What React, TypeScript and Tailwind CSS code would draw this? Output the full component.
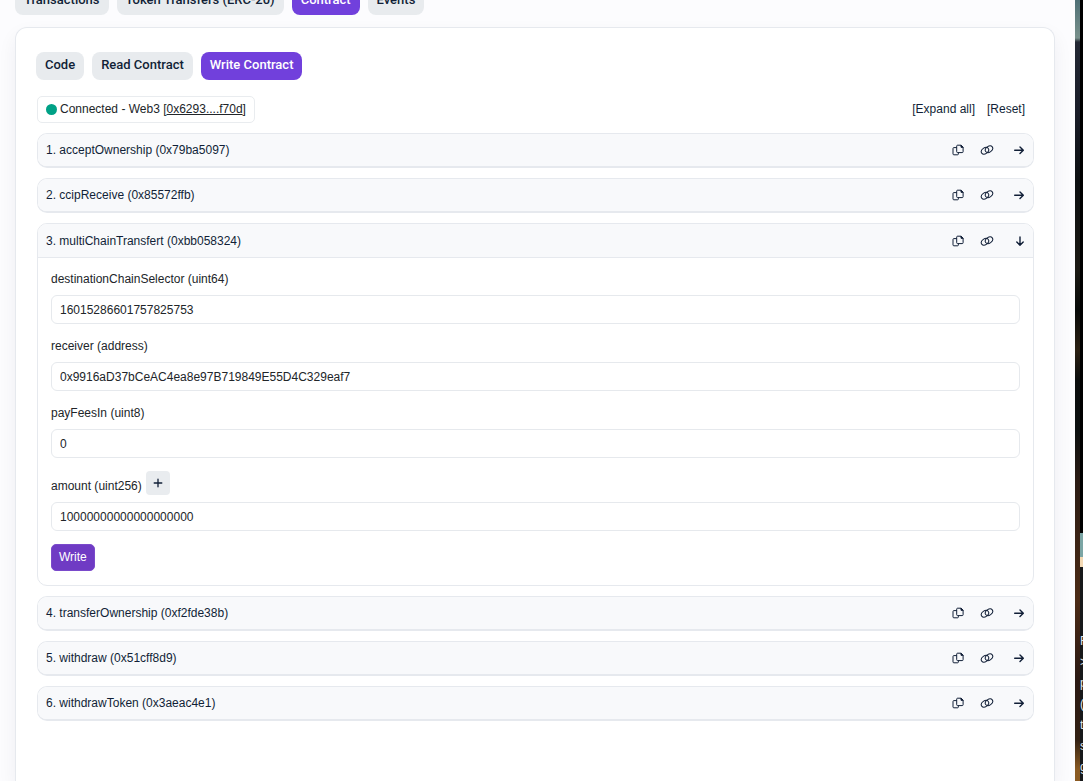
import { useState } from 'react';

const SANS = "font-['Liberation_Sans',Arial,sans-serif]";
const ROBOTO = "font-['Roboto',sans-serif]";

type Field = { name: string; type: string; value: string; canAddZeroes?: boolean };
type Method = { name: string; selector: string; fields: Field[] };

const pageTabs = ['Transactions', 'Token Transfers (ERC-20)', 'Contract', 'Events'];
const contractTabs = ['Code', 'Read Contract', 'Write Contract'];

const methods: Method[] = [
  { name: 'acceptOwnership', selector: '0x79ba5097', fields: [] },
  { name: 'ccipReceive', selector: '0x85572ffb', fields: [] },
  {
    name: 'multiChainTransfert',
    selector: '0xbb058324',
    fields: [
      { name: 'destinationChainSelector', type: 'uint64', value: '16015286601757825753' },
      { name: 'receiver', type: 'address', value: '0x9916aD37bCeAC4ea8e97B719849E55D4C329eaf7' },
      { name: 'payFeesIn', type: 'uint8', value: '0' },
      { name: 'amount', type: 'uint256', value: '10000000000000000000', canAddZeroes: true },
    ],
  },
  { name: 'transferOwnership', selector: '0xf2fde38b', fields: [] },
  { name: 'withdraw', selector: '0x51cff8d9', fields: [] },
  { name: 'withdrawToken', selector: '0x3aeac4e1', fields: [] },
];

function CopyIcon() {
  return (
    <svg viewBox="0 0 12 12" className="w-3 h-3" fill="none" stroke="currentColor" strokeWidth="1" strokeLinejoin="round">
      <path d="M5.6 1.2h3.5l2 2v4.5a.9.9 0 0 1-.9.9H5.6a.9.9 0 0 1-.9-.9V2.1a.9.9 0 0 1 .9-.9z" />
      <path d="M9 1.2v2.1h2.1z" fill="currentColor" />
      <path d="M4.7 3.6H1.9a.9.9 0 0 0-.9.9v5.4a.9.9 0 0 0 .9.9h3.6a.9.9 0 0 0 .9-.9V8.6" />
    </svg>
  );
}

function LinkIcon() {
  return (
    <svg viewBox="0 0 14 12" className="w-3.5 h-3" fill="none" stroke="currentColor" strokeWidth="1">
      <ellipse cx="5" cy="6.8" rx="4" ry="2.9" transform="rotate(-35 5 6.8)" />
      <ellipse cx="9" cy="5.2" rx="4" ry="2.9" transform="rotate(-35 9 5.2)" />
    </svg>
  );
}

function ArrowIcon({ down }: { down: boolean }) {
  return (
    <svg viewBox="0 0 12 12" className="w-3 h-3" fill="none" stroke="currentColor" strokeWidth="1.4" strokeLinecap="round" strokeLinejoin="round">
      <path d={down ? 'M7 2v8.2M3.8 7L7 10.3 10.2 7' : 'M1.7 6.3h8.5M7 3l3.3 3.3L7 9.6'} />
    </svg>
  );
}

function Tabs({ items, initial }: { items: string[]; initial: string }) {
  const [active, setActive] = useState(initial);
  return (
    <nav className={`flex gap-2 ${ROBOTO}`}>
      {items.map((item) => (
        <button
          key={item}
          onClick={() => setActive(item)}
          className={`h-7 px-[9px] pb-[2px] rounded-lg text-[13px] leading-4 font-medium whitespace-nowrap ${
            item === active ? 'bg-[#7140dc] text-white' : 'bg-[#e8ebee] text-[#111f37]'
          }`}
        >
          {item}
        </button>
      ))}
    </nav>
  );
}

function FieldRow({ field }: { field: Field }) {
  const [value, setValue] = useState(field.value);
  return (
    <div>
      <div className={`flex gap-1 mb-[7px] ${field.canAddZeroes ? 'h-6 items-end' : ''}`}>
        <label htmlFor={field.name} className="leading-[18px]">
          {field.name} ({field.type})
        </label>
        {field.canAddZeroes && (
          <button
            aria-label="Add zeroes"
            onClick={() => setValue(value + '0')}
            className="w-6 h-6 rounded bg-[#e9ecef] text-[#111f37] flex items-center justify-center"
          >
            <svg viewBox="0 0 10 10" className="w-[10px] h-[10px]" stroke="currentColor" strokeWidth="1.3" strokeLinecap="round">
              <path d="M5 1.2v7.6M1.2 5h7.6" />
            </svg>
          </button>
        )}
      </div>
      <input
        id={field.name}
        type="text"
        value={value}
        onChange={(e) => setValue(e.target.value)}
        className="block w-full h-[29px] px-2 rounded-md border border-[#e6e9ed] bg-white text-[#212529]"
      />
    </div>
  );
}

function MethodCard({ method, index, open, onToggle }: { method: Method; index: number; open: boolean; onToggle: () => void }) {
  const isOpen = open && method.fields.length > 0;
  return (
    <section className={`rounded-[10px] border border-[#e6e9ee] bg-white overflow-hidden ${isOpen ? '' : 'border-b-2'}`}>
      <div className={`flex items-center bg-[#f8f9fb] pl-2 pr-2 text-[#111f37] ${isOpen ? 'h-[34px] border-b border-[#e6e9ee]' : 'h-8'}`}>
        <button onClick={onToggle} className="flex-1 text-left leading-[18px]">
          {index}. {method.name} ({method.selector})
        </button>
        <div className="flex items-center">
          <button aria-label="Copy method name" className="mr-4">
            <CopyIcon />
          </button>
          <button aria-label="Copy permalink" className="mr-[19px]">
            <LinkIcon />
          </button>
          <button aria-label="Toggle method" onClick={onToggle}>
            <ArrowIcon down={isOpen} />
          </button>
        </div>
      </div>
      {isOpen && (
        <form className="px-[13px] pt-3 pb-[14px] flex flex-col gap-[13px]" onSubmit={(e) => e.preventDefault()}>
          {method.fields.map((field) => (
            <FieldRow key={field.name} field={field} />
          ))}
          <button className="self-start h-[27px] px-[7px] pb-[2px] rounded-[5px] bg-[#6f3bc4] border border-[#7a4acb] text-white">
            Write
          </button>
        </form>
      )}
    </section>
  );
}

// Sliver of the desktop wallpaper and the window behind the browser
function DesktopEdge() {
  return (
    <aside className="flex w-2 shrink-0 overflow-hidden bg-black">
      <div className="w-[5px] shrink-0 bg-[linear-gradient(to_bottom,#4f7076_0px,#78908b_38px,#232834_42px,#1a1d29_110px,#0d1012_180px,#1c1a14_270px,#080a09_310px,#2b2013_350px,#0b0d0d_380px,#0c1010_430px,#2a1b14_480px,#4c2b16_600px,#2b1914_680px,#332114_740px,#8a5a22_770px)]" />
      <div className="w-[3px] shrink-0 overflow-hidden">
        <div className="h-[533px] bg-black" />
        <div className="h-6 bg-[#7ba5a4]" />
        <div className="h-[10px] bg-[#f3d9b4]" />
        <div className="h-full bg-[#17181a] pt-16 text-[12px] leading-[21px] text-gray-200 font-['Liberation_Sans',Arial,sans-serif]">
          {['R', '>', 'p', '(', 't', 's', 'g'].map((line) => (
            <div key={line}>{line}</div>
          ))}
        </div>
      </div>
    </aside>
  );
}

export default function App() {
  const [openMethods, setOpenMethods] = useState<string[]>(['multiChainTransfert']);

  const toggle = (name: string) => {
    setOpenMethods(openMethods.includes(name) ? openMethods.filter((n) => n !== name) : [...openMethods, name]);
  };

  return (
    <div className={`flex h-screen overflow-hidden text-[12px] text-[#212529] ${SANS}`}>
      <main className="flex flex-col flex-1 min-w-0 bg-[#fcfcfe] pl-[15px] pr-5">
        <div className="-mt-[13px] mb-3">
          <Tabs items={pageTabs} initial="Contract" />
        </div>
        <div className="flex-1 rounded-t-xl border border-b-0 border-[#e6e9ee] bg-white px-5 pt-6 shadow-[0_8px_19px_rgba(18,38,63,0.06)]">
          <Tabs items={contractTabs} initial="Write Contract" />
          <div className="flex items-center justify-between mt-4 mb-[10px] pl-px pr-[9px]">
            <div className="flex items-center h-[27px] px-2 pb-px rounded-[5px] border border-[#e9ecef]">
              <span className="w-[11px] h-[11px] mr-[3px] rounded-full bg-[#00a186]" />
              <span>
                Connected - Web3 [
                <a href="#account" className="underline">
                  0x6293....f70d
                </a>
                ]
              </span>
            </div>
            <div className="flex gap-3 pb-[2px] text-[#111f37]">
              <button onClick={() => setOpenMethods(methods.map((m) => m.name))}>[Expand all]</button>
              <button onClick={() => setOpenMethods([])}>[Reset]</button>
            </div>
          </div>
          <div className="flex flex-col gap-[10px] pl-px">
            {methods.map((method, i) => (
              <MethodCard
                key={method.name}
                method={method}
                index={i + 1}
                open={openMethods.includes(method.name)}
                onToggle={() => toggle(method.name)}
              />
            ))}
          </div>
        </div>
      </main>
      <DesktopEdge />
    </div>
  );
}
